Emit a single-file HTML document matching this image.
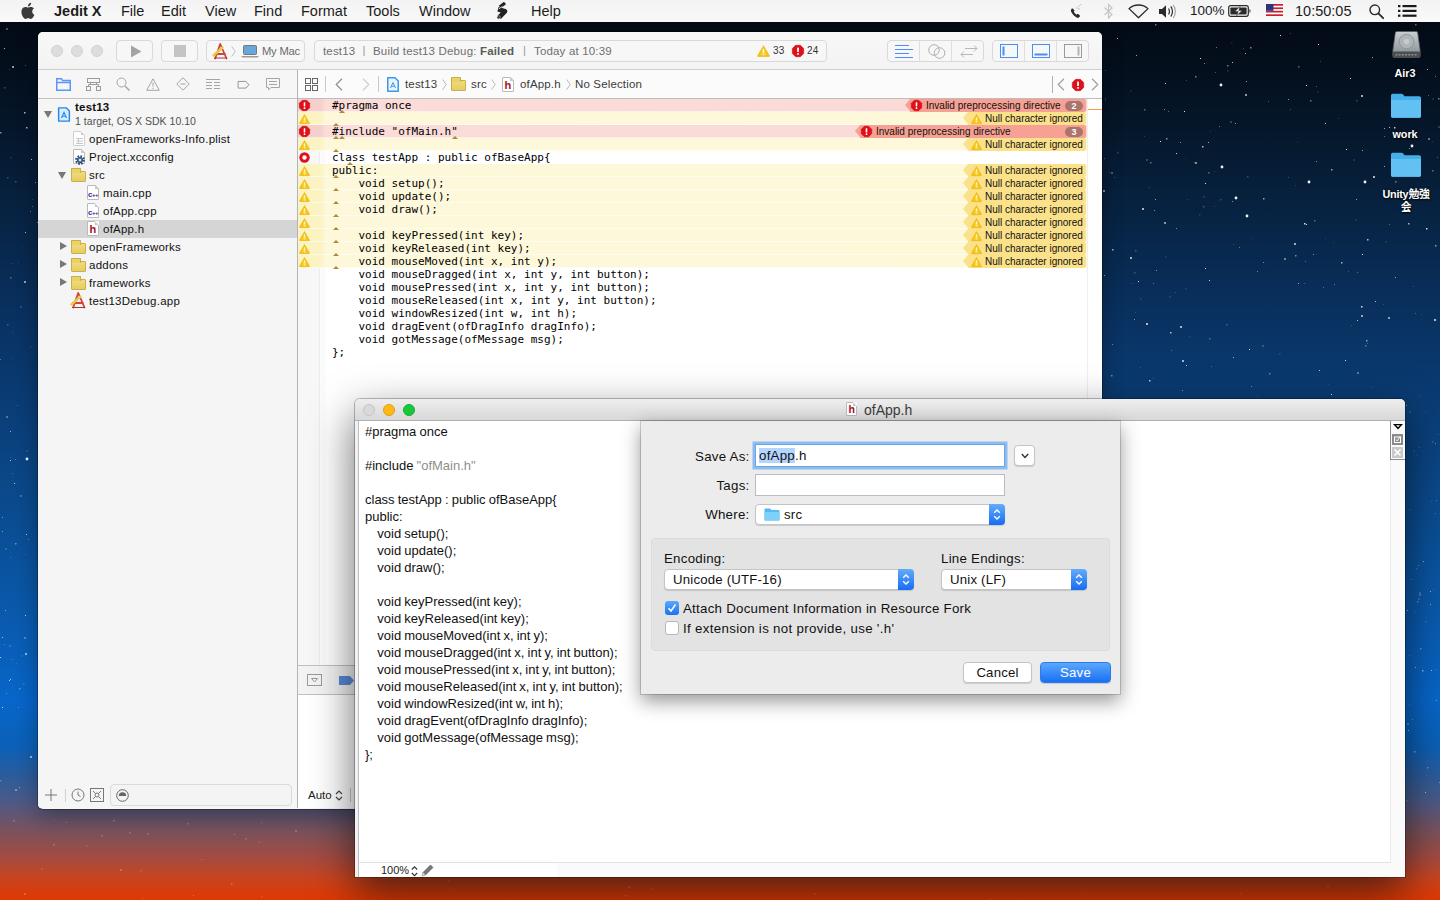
<!DOCTYPE html>
<html><head><meta charset="utf-8"><title>Jedit X</title>
<style>
*{box-sizing:border-box;margin:0;padding:0}
html,body{width:1440px;height:900px;overflow:hidden}
body{font-family:"Liberation Sans","Noto Sans CJK JP",sans-serif;font-size:13px;color:#222;position:relative;
background:linear-gradient(180deg,#02060c 0px,#030a14 22px,#051426 110px,#07213e 200px,#092f5c 300px,#0a3c74 400px,#0a4a8c 500px,#0a57a8 600px,#0766c9 700px,#0a60b8 745px,#2a5c9c 775px,#4a5a88 800px,#7d525a 833px,#a04c44 855px,#c84420 878px,#e03800 900px);}
.abs{position:absolute}
svg{position:absolute;overflow:visible}
#stars{left:0;top:0}
/* menubar */
#menubar{position:absolute;left:0;top:0;width:1440px;height:22px;background:linear-gradient(#f3f3f3,#f7f7f7 70%,#fafafa);font-size:14.5px;color:#1c1c1c}
#menubar span{position:absolute;top:2px;line-height:18px;white-space:nowrap}
.dlab{position:absolute;width:90px;text-align:center;color:#fff;font-weight:bold;font-size:10.8px;line-height:13px;text-shadow:0 1px 2px rgba(0,0,0,.9),0 0 2px rgba(0,0,0,.7)}
/* xcode */
#xc{position:absolute;left:38px;top:32px;width:1064px;height:777px;background:#f5f5f5;border-radius:5px;overflow:hidden;box-shadow:0 8px 22px rgba(0,0,0,.32),0 0 0 1px rgba(0,0,0,.28)}
#xtb{position:absolute;left:0;top:0;width:1064px;height:38px;background:linear-gradient(#f8f8f8,#f3f3f3);border-bottom:1px solid #cfcfcf}
.tl{position:absolute;width:12px;height:12px;border-radius:50%;background:#dddddd;border:1px solid #d2d2d2}
.btn{position:absolute;top:8px;height:22px;border:1px solid #d9d9d9;border-radius:4px;background:#f7f7f7}
.btn b{position:absolute;top:0;width:1px;height:20px;background:#dedede}
#side{position:absolute;left:0;top:38px;width:260px;height:738px;background:#f5f5f5;border-right:1px solid #b4b4b4}
#snav{position:absolute;left:0;top:0;width:259px;height:29px;border-bottom:1px solid #c2c2c2;background:#f6f6f6}
.row{position:absolute;left:0;width:259px;height:18px;font-size:11.5px;letter-spacing:.23px;line-height:18px;color:#111;white-space:nowrap}
.row span{position:absolute;top:0}
.tri{position:absolute;width:0;height:0;border-style:solid}
.td{border-width:7px 4.5px 0 4.5px;border-color:#777 transparent transparent transparent}
.tr{border-width:4.5px 0 4.5px 7px;border-color:transparent transparent transparent #777}
.fold{position:absolute;width:15px;height:11px;background:linear-gradient(#f0dc7a,#e6cd62);border:1px solid #c9b04a;border-radius:1px}
.fold:before{content:"";position:absolute;left:-1px;top:-4px;width:8px;height:4px;background:#e8d36a;border:1px solid #c9b04a;border-bottom:none;border-radius:1px 1px 0 0}
.doc{position:absolute;width:12px;height:15px;background:#fff;border:1px solid #b9b9b9;border-radius:1px}
.doc:after{content:"";position:absolute;right:-1px;top:-1px;width:4px;height:4px;background:linear-gradient(225deg,#f5f5f5 50%,#c9c9c9 50%)}
.doc em{position:absolute;left:0;bottom:-1px;font-style:normal;font-weight:bold;font-size:8px;line-height:9px;color:#4b1a9a;letter-spacing:-.5px}
#ed{position:absolute;left:260px;top:38px;width:804px;height:738px;background:#fff}
#jump{position:absolute;left:0;top:0;width:804px;height:29px;border-bottom:1px solid #bdbdbd;background:#fbfbfb;font-size:11.5px;letter-spacing:.15px;color:#3c3c3c}
#jump span{position:absolute;top:6px;line-height:16px;white-space:nowrap}
#jump i{position:absolute;top:7px;font-style:normal;color:#a8a8a8;font-size:12px;line-height:14px}
#gut{position:absolute;left:0;top:29px;width:28px;height:570px;background:#f7f7f7;border-right:1px solid #e4e4e4}
#gut2{position:absolute;left:21px;top:29px;width:7px;height:570px;background:#fbfbfb;border-left:1px solid #ececec}
.ln{position:absolute;left:0;width:789px;height:13px}
.ln.w,.ln.e{box-shadow:inset 0 -1px 0 rgba(255,255,255,.55)}
.code{position:absolute;left:34px;top:0;font:11px/13px "DejaVu Sans Mono","Liberation Mono",monospace;color:#000;white-space:pre}
.w{background:linear-gradient(90deg,#fbf3c2 0,#fbf3c2 22px,#fdf8da 28px,#fdf8d8 100%)}
.e{background:linear-gradient(90deg,#f5cfc9 0,#f5cfc9 22px,#fbdcd8 28px,#fbdad6 100%)}
.tagw,.tage{position:absolute;top:0;height:13px;font-size:10px;line-height:13px;color:#111;white-space:nowrap;border-radius:0 2px 2px 0}
.tagw{left:670px;width:118px;background:#fbe18a;padding-left:17px}
.tage{background:#f6a193;padding-left:16px}
.tagw:before,.tage:before{content:"";position:absolute;left:-5px;top:0;width:0;height:0;border-style:solid;border-width:6.5px 5px 6.5px 0}
.tagw:before{border-color:transparent #fbe18a transparent transparent}
.tage:before{border-color:transparent #f6a193 transparent transparent}
.cnt{position:absolute;right:3px;top:1.5px;width:18px;height:10px;border-radius:5px;background:#a9746c;color:#fff;font-weight:bold;font-size:9px;line-height:10px;text-align:center}
.nm{position:absolute;width:0;height:0;border-style:solid;border-width:0 3px 3px 3px;border-color:transparent transparent #b08a2e transparent}
/* jedit */
#jd{position:absolute;left:355px;top:399px;width:1050px;height:478px;background:#fff;border-radius:5px 5px 0 0;box-shadow:0 16px 44px rgba(0,0,0,.6),0 0 0 1px rgba(0,0,0,.25)}
#jtb{position:absolute;left:0;top:0;width:1050px;height:22px;background:linear-gradient(#eeeeee,#d8d8d8);border-radius:5px 5px 0 0;border-bottom:1px solid #b0b0b0;font-size:13.5px;color:#3a3a3a}
#jtxt{position:absolute;left:10px;top:24px;font-size:13px;line-height:17px;color:#111;white-space:pre;word-spacing:-.5px}
/* sheet */
#sh{position:absolute;left:641px;top:421px;width:479px;height:273px;background:#ececec;box-shadow:0 7px 18px rgba(0,0,0,.42),0 0 0 1px rgba(0,0,0,.16);font-size:13.3px;letter-spacing:.25px;color:#111}
#sh .lab{position:absolute;line-height:18px;white-space:nowrap;margin-top:1px}
.pop{position:absolute;height:21px;background:#fff;border:1px solid #c4c4c4;border-radius:4px;line-height:19px;box-shadow:0 1px 1px rgba(0,0,0,.14);white-space:nowrap;font-size:13.2px;letter-spacing:.2px}
.pop i{position:absolute;right:-1px;top:-1px;width:16px;height:21px;border-radius:0 4px 4px 0;background:linear-gradient(#62acfb,#176df3)}
.fld{position:absolute;height:22px;background:#fff;border:1px solid #bcbcbc}

.ind{display:inline-block;width:12.3px}

</style></head><body>
<svg id="stars" width="1440" height="900" viewBox="0 0 1440 900"><g fill="#fff"><rect x="1268" y="101" width="1" height="1" opacity="0.3"/><rect x="1140" y="298" width="1.5" height="1.5" opacity="0.14"/><rect x="1132" y="283" width="1" height="1" opacity="0.19"/><rect x="1325" y="238" width="1" height="1" opacity="0.13"/><rect x="1385" y="241" width="1.5" height="1.5" opacity="0.13"/><rect x="1166" y="138" width="1.5" height="1.5" opacity="0.5"/><rect x="1134" y="319" width="1" height="1" opacity="0.46"/><rect x="1216" y="47" width="1" height="1" opacity="0.43"/><rect x="1251" y="238" width="1" height="1" opacity="0.16"/><rect x="1395" y="181" width="1.5" height="1.5" opacity="0.44"/><rect x="1195" y="76" width="1.5" height="1.5" opacity="0.46"/><rect x="1199" y="214" width="1.5" height="1.5" opacity="0.14"/><rect x="1135" y="312" width="1" height="1" opacity="0.13"/><rect x="1357" y="372" width="2" height="2" opacity="0.33"/><rect x="1263" y="262" width="1" height="1" opacity="0.46"/><rect x="1288" y="177" width="1" height="1" opacity="0.21"/><rect x="1227" y="65" width="1.5" height="1.5" opacity="0.45"/><rect x="1356" y="199" width="1" height="1" opacity="0.6"/><rect x="1414" y="61" width="1" height="1" opacity="0.15"/><rect x="1187" y="199" width="1" height="1" opacity="0.16"/><rect x="1318" y="44" width="1" height="1" opacity="0.85"/><rect x="1388" y="317" width="2" height="2" opacity="0.54"/><rect x="1263" y="198" width="1.5" height="1.5" opacity="0.57"/><rect x="1357" y="320" width="1" height="1" opacity="0.68"/><rect x="1150" y="162" width="1.5" height="1.5" opacity="0.36"/><rect x="1136" y="55" width="1" height="1" opacity="0.6"/><rect x="1434" y="319" width="2" height="2" opacity="0.68"/><rect x="1331" y="169" width="1.5" height="1.5" opacity="0.59"/><rect x="1280" y="35" width="1" height="1" opacity="0.85"/><rect x="1189" y="336" width="1" height="1" opacity="0.15"/><rect x="1214" y="171" width="1" height="1" opacity="0.15"/><rect x="1306" y="224" width="1" height="1" opacity="0.82"/><rect x="1144" y="109" width="1.5" height="1.5" opacity="0.34"/><rect x="1245" y="94" width="2" height="2" opacity="0.56"/><rect x="1384" y="166" width="1" height="1" opacity="0.58"/><rect x="1297" y="142" width="1" height="1" opacity="0.16"/><rect x="1180" y="142" width="1" height="1" opacity="0.53"/><rect x="1351" y="325" width="1" height="1" opacity="0.17"/><rect x="1105" y="98" width="1" height="1" opacity="0.32"/><rect x="1415" y="313" width="1" height="1" opacity="0.25"/><rect x="1366" y="340" width="1.5" height="1.5" opacity="0.53"/><rect x="1130" y="257" width="2" height="2" opacity="0.64"/><rect x="1389" y="224" width="1" height="1" opacity="0.3"/><rect x="1156" y="270" width="1" height="1" opacity="0.51"/><rect x="1200" y="58" width="1" height="1" opacity="0.85"/><rect x="1186" y="80" width="1" height="1" opacity="0.26"/><rect x="1155" y="24" width="1.5" height="1.5" opacity="0.44"/><rect x="1154" y="210" width="1" height="1" opacity="0.49"/><rect x="1209" y="338" width="1.5" height="1.5" opacity="0.29"/><rect x="1232" y="201" width="1" height="1" opacity="0.48"/><rect x="1165" y="83" width="1" height="1" opacity="0.74"/><rect x="1348" y="271" width="1" height="1" opacity="0.24"/><rect x="1155" y="199" width="1" height="1" opacity="0.61"/><rect x="1185" y="288" width="1.5" height="1.5" opacity="0.12"/><rect x="1288" y="99" width="1" height="1" opacity="0.56"/><rect x="1373" y="176" width="2" height="2" opacity="0.68"/><rect x="1149" y="380" width="1.5" height="1.5" opacity="0.73"/><rect x="1290" y="109" width="1" height="1" opacity="0.27"/><rect x="1375" y="301" width="1" height="1" opacity="0.66"/><rect x="1428" y="138" width="2" height="2" opacity="0.39"/><rect x="1202" y="146" width="1.5" height="1.5" opacity="0.7"/><rect x="1219" y="126" width="1" height="1" opacity="0.4"/><rect x="1117" y="38" width="1" height="1" opacity="0.67"/><rect x="1235" y="123" width="1" height="1" opacity="0.56"/><rect x="1331" y="394" width="1" height="1" opacity="0.85"/><rect x="1144" y="136" width="1" height="1" opacity="0.14"/><rect x="1203" y="196" width="1.5" height="1.5" opacity="0.18"/><rect x="1415" y="24" width="1.5" height="1.5" opacity="0.37"/><rect x="1279" y="353" width="1.5" height="1.5" opacity="0.14"/><rect x="1164" y="222" width="2" height="2" opacity="0.53"/><rect x="1205" y="268" width="1" height="1" opacity="0.78"/><rect x="1428" y="194" width="1.5" height="1.5" opacity="0.14"/><rect x="1305" y="261" width="1" height="1" opacity="0.31"/><rect x="1184" y="111" width="1" height="1" opacity="0.85"/><rect x="1180" y="326" width="2" height="2" opacity="0.64"/><rect x="1438" y="98" width="1.5" height="1.5" opacity="0.48"/><rect x="1345" y="360" width="1" height="1" opacity="0.84"/><rect x="1383" y="304" width="1" height="1" opacity="0.15"/><rect x="1435" y="76" width="1" height="1" opacity="0.41"/><rect x="1325" y="123" width="1" height="1" opacity="0.71"/><rect x="1117" y="152" width="1.5" height="1.5" opacity="0.19"/><rect x="1226" y="324" width="1.5" height="1.5" opacity="0.25"/><rect x="1317" y="91" width="1.5" height="1.5" opacity="0.13"/><rect x="1284" y="258" width="2" height="2" opacity="0.42"/><rect x="1367" y="239" width="1.5" height="1.5" opacity="0.71"/><rect x="1169" y="296" width="1.5" height="1.5" opacity="0.16"/><rect x="1112" y="249" width="1.5" height="1.5" opacity="0.65"/><rect x="1105" y="100" width="1" height="1" opacity="0.17"/><rect x="1419" y="395" width="1" height="1" opacity="0.15"/><rect x="1269" y="373" width="1.5" height="1.5" opacity="0.4"/><rect x="1350" y="78" width="1" height="1" opacity="0.78"/><rect x="1230" y="121" width="2" height="2" opacity="0.18"/><rect x="1153" y="283" width="1" height="1" opacity="0.34"/><rect x="1135" y="250" width="1.5" height="1.5" opacity="0.25"/><rect x="1413" y="286" width="1" height="1" opacity="0.18"/><rect x="1334" y="284" width="1" height="1" opacity="0.41"/><rect x="1362" y="150" width="1" height="1" opacity="0.57"/><rect x="1389" y="127" width="1" height="1" opacity="0.73"/><rect x="1316" y="86" width="1" height="1" opacity="0.3"/><rect x="1140" y="367" width="1" height="1" opacity="0.2"/><rect x="1211" y="366" width="1" height="1" opacity="0.24"/><rect x="1182" y="390" width="1" height="1" opacity="0.52"/><rect x="1176" y="153" width="1" height="1" opacity="0.78"/><rect x="1215" y="72" width="1" height="1" opacity="0.3"/><rect x="1186" y="365" width="1" height="1" opacity="0.72"/><rect x="1323" y="287" width="1" height="1" opacity="0.31"/><rect x="1203" y="206" width="1.5" height="1.5" opacity="0.25"/><rect x="1290" y="33" width="1" height="1" opacity="0.26"/><rect x="1328" y="384" width="1" height="1" opacity="0.12"/><rect x="1367" y="343" width="1" height="1" opacity="0.23"/><rect x="1160" y="141" width="1" height="1" opacity="0.85"/><rect x="1146" y="159" width="2" height="2" opacity="0.18"/><rect x="1195" y="162" width="2" height="2" opacity="0.5"/><rect x="1319" y="370" width="1" height="1" opacity="0.7"/><rect x="1310" y="100" width="1.5" height="1.5" opacity="0.42"/><rect x="1395" y="277" width="1" height="1" opacity="0.57"/><rect x="1245" y="53" width="1" height="1" opacity="0.68"/><rect x="1320" y="61" width="1" height="1" opacity="0.22"/><rect x="1427" y="69" width="1" height="1" opacity="0.68"/><rect x="1414" y="137" width="2" height="2" opacity="0.1"/><rect x="1165" y="256" width="1.5" height="1.5" opacity="0.12"/><rect x="1316" y="161" width="1" height="1" opacity="0.49"/><rect x="1372" y="387" width="1" height="1" opacity="0.2"/><rect x="1185" y="158" width="1" height="1" opacity="0.13"/><rect x="1262" y="345" width="2" height="2" opacity="0.19"/><rect x="1208" y="172" width="1.5" height="1.5" opacity="0.34"/><rect x="1194" y="162" width="1" height="1" opacity="0.27"/><rect x="1231" y="42" width="1.5" height="1.5" opacity="0.12"/><rect x="1361" y="306" width="1.5" height="1.5" opacity="0.85"/><rect x="1346" y="149" width="1" height="1" opacity="0.84"/><rect x="1435" y="245" width="1.5" height="1.5" opacity="0.53"/><rect x="1304" y="283" width="1" height="1" opacity="0.24"/><rect x="1220" y="199" width="1.5" height="1.5" opacity="0.18"/><rect x="1428" y="95" width="1" height="1" opacity="0.31"/><rect x="1130" y="90" width="1.5" height="1.5" opacity="0.12"/><rect x="1233" y="244" width="1" height="1" opacity="0.16"/><rect x="1298" y="283" width="1" height="1" opacity="0.54"/><rect x="1409" y="148" width="1" height="1" opacity="0.56"/><rect x="1338" y="118" width="1" height="1" opacity="0.16"/><rect x="1104" y="158" width="1" height="1" opacity="0.28"/><rect x="1383" y="189" width="1" height="1" opacity="0.2"/><rect x="1214" y="206" width="1" height="1" opacity="0.17"/><rect x="1298" y="66" width="1.5" height="1.5" opacity="0.36"/><rect x="1438" y="126" width="2" height="2" opacity="0.17"/><rect x="1105" y="70" width="1" height="1" opacity="0.22"/><rect x="1176" y="228" width="1" height="1" opacity="0.46"/><rect x="1114" y="177" width="1" height="1" opacity="0.24"/><rect x="1146" y="323" width="2" height="2" opacity="0.68"/><rect x="1182" y="360" width="2" height="2" opacity="0.63"/><rect x="1408" y="223" width="1.5" height="1.5" opacity="0.64"/><rect x="1356" y="100" width="1.5" height="1.5" opacity="0.23"/><rect x="1432" y="98" width="2" height="2" opacity="0.1"/><rect x="1365" y="345" width="1.5" height="1.5" opacity="0.33"/><rect x="1361" y="95" width="2" height="2" opacity="0.65"/><rect x="1361" y="315" width="2" height="2" opacity="0.58"/><rect x="1111" y="375" width="1.5" height="1.5" opacity="0.46"/><rect x="1432" y="141" width="1" height="1" opacity="0.14"/><rect x="1171" y="350" width="1" height="1" opacity="0.28"/><rect x="1295" y="255" width="1.5" height="1.5" opacity="0.44"/><rect x="1112" y="344" width="1" height="1" opacity="0.41"/><rect x="1353" y="159" width="2" height="2" opacity="0.1"/><rect x="1138" y="281" width="1" height="1" opacity="0.79"/><rect x="1372" y="57" width="1" height="1" opacity="0.62"/><rect x="1232" y="62" width="1" height="1" opacity="0.73"/><rect x="1208" y="142" width="1" height="1" opacity="0.61"/><rect x="1355" y="219" width="1.5" height="1.5" opacity="0.13"/><rect x="1250" y="47" width="1.5" height="1.5" opacity="0.49"/><rect x="1204" y="63" width="1" height="1" opacity="0.47"/><rect x="1233" y="357" width="1" height="1" opacity="0.62"/><rect x="1421" y="314" width="1" height="1" opacity="0.15"/><rect x="1134" y="272" width="1.5" height="1.5" opacity="0.22"/><rect x="1153" y="378" width="1" height="1" opacity="0.19"/><rect x="1251" y="386" width="1" height="1" opacity="0.4"/><rect x="1341" y="262" width="1.5" height="1.5" opacity="0.64"/><rect x="1205" y="183" width="1" height="1" opacity="0.85"/><rect x="1111" y="172" width="2" height="2" opacity="0.28"/><rect x="1362" y="254" width="1" height="1" opacity="0.85"/><rect x="1210" y="131" width="1" height="1" opacity="0.13"/><rect x="1175" y="292" width="1" height="1" opacity="0.21"/><rect x="1170" y="332" width="1.5" height="1.5" opacity="0.7"/><rect x="1246" y="81" width="1" height="1" opacity="0.58"/><rect x="1357" y="272" width="1" height="1" opacity="0.3"/><rect x="1104" y="275" width="1" height="1" opacity="0.55"/><rect x="1257" y="396" width="1" height="1" opacity="0.15"/><rect x="1295" y="185" width="1" height="1" opacity="0.15"/><rect x="1103" y="190" width="2" height="2" opacity="0.5"/><rect x="1306" y="85" width="1" height="1" opacity="0.84"/><rect x="1109" y="172" width="1" height="1" opacity="0.21"/><rect x="1304" y="223" width="1.5" height="1.5" opacity="0.85"/><rect x="1142" y="208" width="2" height="2" opacity="0.66"/><rect x="1243" y="48" width="1" height="1" opacity="0.22"/><rect x="1249" y="349" width="1" height="1" opacity="0.84"/><rect x="1239" y="247" width="1" height="1" opacity="0.39"/><rect x="1294" y="243" width="2" height="2" opacity="0.62"/><rect x="1426" y="228" width="1.5" height="1.5" opacity="0.81"/><rect x="1384" y="128" width="1" height="1" opacity="0.59"/><rect x="1313" y="254" width="1" height="1" opacity="0.49"/><rect x="1432" y="170" width="1.5" height="1.5" opacity="0.37"/><rect x="1168" y="111" width="1" height="1" opacity="0.36"/><rect x="1247" y="176" width="1.5" height="1.5" opacity="0.21"/><rect x="1437" y="157" width="1" height="1" opacity="0.31"/><rect x="1257" y="271" width="1" height="1" opacity="0.43"/><rect x="1164" y="109" width="1" height="1" opacity="0.51"/><rect x="1209" y="280" width="1" height="1" opacity="0.8"/><rect x="1384" y="136" width="1" height="1" opacity="0.35"/><rect x="1333" y="242" width="1" height="1" opacity="0.15"/><rect x="1227" y="70" width="1.5" height="1.5" opacity="0.17"/><rect x="1149" y="187" width="1" height="1" opacity="0.2"/><rect x="1394" y="127" width="1.5" height="1.5" opacity="0.78"/><rect x="1314" y="220" width="1.5" height="1.5" opacity="0.32"/><rect x="1419" y="592" width="2" height="2" opacity="0.18"/><rect x="1409" y="655" width="1" height="1" opacity="0.22"/><rect x="1414" y="751" width="1.5" height="1.5" opacity="0.39"/><rect x="1419" y="447" width="1" height="1" opacity="0.22"/><rect x="1430" y="604" width="1" height="1" opacity="0.52"/><rect x="1425" y="411" width="1" height="1" opacity="0.15"/><rect x="1436" y="700" width="1" height="1" opacity="0.38"/><rect x="1431" y="670" width="1" height="1" opacity="0.6"/><rect x="1421" y="800" width="1" height="1" opacity="0.14"/><rect x="1415" y="667" width="1" height="1" opacity="0.6"/><rect x="1435" y="443" width="1" height="1" opacity="0.43"/><rect x="1406" y="800" width="1.5" height="1.5" opacity="0.15"/><rect x="1408" y="730" width="1" height="1" opacity="0.59"/><rect x="1422" y="670" width="1.5" height="1.5" opacity="0.51"/><rect x="1413" y="450" width="1.5" height="1.5" opacity="0.13"/><rect x="1418" y="598" width="2" height="2" opacity="0.17"/><rect x="1406" y="405" width="1" height="1" opacity="0.42"/><rect x="1423" y="561" width="1" height="1" opacity="0.52"/><rect x="1436" y="669" width="1" height="1" opacity="0.2"/><rect x="1407" y="610" width="1" height="1" opacity="0.58"/><rect x="1409" y="411" width="1.5" height="1.5" opacity="0.18"/><rect x="1432" y="441" width="1.5" height="1.5" opacity="0.21"/><rect x="1433" y="589" width="1" height="1" opacity="0.19"/><rect x="1427" y="767" width="1.5" height="1.5" opacity="0.32"/><rect x="1431" y="501" width="1" height="1" opacity="0.12"/><rect x="1438" y="434" width="1" height="1" opacity="0.18"/><rect x="1425" y="792" width="1" height="1" opacity="0.6"/><rect x="1435" y="513" width="1" height="1" opacity="0.22"/><rect x="1412" y="719" width="1" height="1" opacity="0.38"/><rect x="1420" y="648" width="1.5" height="1.5" opacity="0.32"/><rect x="1409" y="704" width="1" height="1" opacity="0.16"/><rect x="1409" y="509" width="1.5" height="1.5" opacity="0.12"/><rect x="1415" y="612" width="1" height="1" opacity="0.13"/><rect x="1417" y="601" width="1.5" height="1.5" opacity="0.34"/><rect x="1426" y="775" width="1" height="1" opacity="0.14"/><rect x="1416" y="568" width="1.5" height="1.5" opacity="0.18"/><rect x="1439" y="782" width="1" height="1" opacity="0.36"/><rect x="1430" y="591" width="1" height="1" opacity="0.6"/><rect x="1416" y="455" width="1" height="1" opacity="0.12"/><rect x="1411" y="579" width="1" height="1" opacity="0.32"/><rect x="1419" y="594" width="2" height="2" opacity="0.22"/><rect x="1425" y="621" width="1.5" height="1.5" opacity="0.14"/><rect x="1436" y="500" width="1" height="1" opacity="0.28"/><rect x="1418" y="565" width="1" height="1" opacity="0.28"/><rect x="1407" y="723" width="2" height="2" opacity="0.25"/><rect x="25" y="65" width="1" height="1" opacity="0.29"/><rect x="4" y="87" width="1.5" height="1.5" opacity="0.21"/><rect x="4" y="644" width="1" height="1" opacity="0.26"/><rect x="21" y="655" width="1.5" height="1.5" opacity="0.13"/><rect x="20" y="306" width="1.5" height="1.5" opacity="0.23"/><rect x="4" y="48" width="1" height="1" opacity="0.7"/><rect x="30" y="756" width="2" height="2" opacity="0.56"/><rect x="24" y="281" width="2" height="2" opacity="0.56"/><rect x="31" y="159" width="1" height="1" opacity="0.7"/><rect x="0" y="780" width="1.5" height="1.5" opacity="0.24"/><rect x="9" y="645" width="2" height="2" opacity="0.16"/><rect x="20" y="495" width="2" height="2" opacity="0.22"/><rect x="5" y="548" width="2" height="2" opacity="0.14"/><rect x="10" y="277" width="1.5" height="1.5" opacity="0.31"/><rect x="2" y="517" width="1" height="1" opacity="0.43"/><rect x="10" y="460" width="1" height="1" opacity="0.7"/><rect x="16" y="663" width="1" height="1" opacity="0.14"/><rect x="26" y="534" width="1" height="1" opacity="0.7"/><rect x="11" y="263" width="1" height="1" opacity="0.15"/><rect x="15" y="789" width="2" height="2" opacity="0.34"/><rect x="7" y="324" width="1.5" height="1.5" opacity="0.23"/><rect x="17" y="405" width="1" height="1" opacity="0.21"/><rect x="12" y="473" width="1" height="1" opacity="0.21"/><rect x="15" y="181" width="1.5" height="1.5" opacity="0.23"/><rect x="12" y="358" width="1" height="1" opacity="0.13"/><rect x="15" y="543" width="1.5" height="1.5" opacity="0.41"/><rect x="6" y="693" width="1" height="1" opacity="0.35"/><rect x="6" y="28" width="2" height="2" opacity="0.29"/><rect x="14" y="483" width="1" height="1" opacity="0.7"/><rect x="18" y="262" width="1" height="1" opacity="0.15"/><rect x="37" y="222" width="1" height="1" opacity="0.7"/><rect x="32" y="206" width="1" height="1" opacity="0.34"/><rect x="0" y="132" width="1.5" height="1.5" opacity="0.51"/><rect x="22" y="246" width="1" height="1" opacity="0.12"/><rect x="9" y="69" width="1" height="1" opacity="0.18"/><rect x="2" y="637" width="1" height="1" opacity="0.61"/><rect x="0" y="359" width="1" height="1" opacity="0.31"/><rect x="11" y="659" width="1" height="1" opacity="0.24"/><rect x="2" y="531" width="1" height="1" opacity="0.43"/><rect x="26" y="127" width="1.5" height="1.5" opacity="0.68"/><rect x="35" y="182" width="1" height="1" opacity="0.51"/><rect x="10" y="431" width="1" height="1" opacity="0.57"/><rect x="18" y="707" width="1" height="1" opacity="0.24"/><rect x="19" y="787" width="1" height="1" opacity="0.44"/><rect x="26" y="450" width="2" height="2" opacity="0.1"/><rect x="23" y="683" width="1.5" height="1.5" opacity="0.18"/><rect x="25" y="232" width="1" height="1" opacity="0.7"/><rect x="10" y="457" width="1" height="1" opacity="0.14"/><rect x="25" y="615" width="1" height="1" opacity="0.7"/><rect x="10" y="157" width="1.5" height="1.5" opacity="0.12"/><rect x="9" y="680" width="1" height="1" opacity="0.69"/><rect x="5" y="610" width="1" height="1" opacity="0.49"/><rect x="32" y="199" width="1" height="1" opacity="0.16"/><rect x="10" y="557" width="1" height="1" opacity="0.17"/><rect x="6" y="416" width="2" height="2" opacity="0.3"/><rect x="12" y="332" width="1" height="1" opacity="0.15"/><rect x="30" y="346" width="1.5" height="1.5" opacity="0.13"/><rect x="24" y="112" width="1.5" height="1.5" opacity="0.7"/><rect x="10" y="679" width="1" height="1" opacity="0.66"/><rect x="25" y="653" width="2" height="2" opacity="0.56"/><rect x="30" y="211" width="1" height="1" opacity="0.44"/><rect x="25" y="554" width="1" height="1" opacity="0.16"/><rect x="7" y="177" width="1.5" height="1.5" opacity="0.21"/><rect x="12" y="66" width="2" height="2" opacity="0.56"/><rect x="2" y="707" width="1" height="1" opacity="0.7"/><rect x="24" y="637" width="2" height="2" opacity="0.28"/><rect x="19" y="688" width="1.5" height="1.5" opacity="0.32"/><rect x="15" y="459" width="1" height="1" opacity="0.3"/><rect x="28" y="539" width="1" height="1" opacity="0.33"/><rect x="0" y="657" width="1" height="1" opacity="0.7"/><rect x="120" y="869" width="2" height="2" opacity="0.2"/><rect x="234" y="834" width="1" height="1" opacity="0.25"/><rect x="54" y="820" width="1" height="1" opacity="0.15"/><rect x="187" y="823" width="1.5" height="1.5" opacity="0.25"/><rect x="261" y="896" width="1.5" height="1.5" opacity="0.12"/><rect x="66" y="822" width="1" height="1" opacity="0.25"/><rect x="261" y="822" width="1.5" height="1.5" opacity="0.13"/><rect x="193" y="895" width="1" height="1" opacity="0.25"/><rect x="13" y="820" width="1.5" height="1.5" opacity="0.25"/><rect x="354" y="826" width="1" height="1" opacity="0.18"/><rect x="147" y="833" width="1.5" height="1.5" opacity="0.25"/><rect x="113" y="820" width="1.5" height="1.5" opacity="0.25"/><rect x="129" y="832" width="1.5" height="1.5" opacity="0.25"/><rect x="140" y="870" width="1.5" height="1.5" opacity="0.16"/><rect x="245" y="838" width="1.5" height="1.5" opacity="0.25"/><rect x="259" y="842" width="1" height="1" opacity="0.25"/><rect x="101" y="835" width="1.5" height="1.5" opacity="0.25"/><rect x="142" y="898" width="1" height="1" opacity="0.25"/><rect x="86" y="845" width="1.5" height="1.5" opacity="0.15"/><rect x="24" y="893" width="2" height="2" opacity="0.2"/><rect x="231" y="883" width="1.5" height="1.5" opacity="0.25"/><rect x="53" y="844" width="1.5" height="1.5" opacity="0.25"/><rect x="201" y="859" width="1" height="1" opacity="0.22"/><rect x="295" y="830" width="2" height="2" opacity="0.2"/><rect x="41" y="868" width="1.5" height="1.5" opacity="0.2"/><rect x="453" y="889" width="1" height="1" opacity="0.2"/><rect x="990" y="898" width="1" height="1" opacity="0.2"/><rect x="358" y="881" width="1" height="1" opacity="0.19"/><rect x="1240" y="893" width="1" height="1" opacity="0.2"/><rect x="625" y="895" width="1.5" height="1.5" opacity="0.19"/><rect x="448" y="880" width="1.5" height="1.5" opacity="0.13"/><rect x="1081" y="889" width="1" height="1" opacity="0.14"/><rect x="814" y="893" width="1.5" height="1.5" opacity="0.2"/><rect x="628" y="886" width="2" height="2" opacity="0.16"/><rect x="1327" y="885" width="2" height="2" opacity="0.12"/><rect x="853" y="884" width="1" height="1" opacity="0.2"/><rect x="651" y="888" width="1" height="1" opacity="0.2"/><circle cx="1309" cy="182" r="1.400" opacity=".95"/><circle cx="1222" cy="167" r="1.400" opacity=".95"/><circle cx="1236" cy="198" r="1.400" opacity=".95"/><circle cx="1221" cy="85" r="1.400" opacity=".95"/><circle cx="1397" cy="45" r="1.400" opacity=".95"/><circle cx="1412" cy="146" r="1.400" opacity=".95"/><circle cx="1365" cy="182" r="1.400" opacity=".95"/><circle cx="27" cy="459" r="1.400" opacity=".95"/><circle cx="1247" cy="216" r="1.400" opacity=".95"/></g></svg>
<div id="menubar">
<svg style="left:20.500px;top:2px" width="16" height="18" viewBox="0 0 16 18"><path d="M11.2 9.5c0-2 1.6-2.9 1.7-3-.9-1.400-2.400-1.600-2.900-1.600-1.200-.1-2.400.7-3 .7-.6 0-1.600-.7-2.600-.7-1.300 0-2.600.8-3.300 2-1.400 2.400-.4 6 1 8 .700 1 1.500 2.100 2.500 2 1-.04 1.400-.65 2.600-.65 1.200 0 1.600.65 2.600.63 1.100-.02 1.800-1 2.400-1.950.800-1.100 1.100-2.200 1.100-2.250-.03-.01-2.100-.8-2.100-3.180zM9.300 3.300c.500-.700.900-1.600.800-2.500-.800.030-1.700.500-2.300 1.200-.500.600-.950 1.500-.830 2.400.870.070 1.770-.440 2.330-1.100z" fill="#3a3a3a"/></svg>
<span style="left:54px;font-weight:bold">Jedit X</span>
<span style="left:121px">File</span>
<span style="left:161px">Edit</span>
<span style="left:205px">View</span>
<span style="left:254px">Find</span>
<span style="left:301px">Format</span>
<span style="left:366px">Tools</span>
<span style="left:419px">Window</span>
<svg style="left:495px;top:1px" width="14" height="20" viewBox="0 0 14 20"><path d="M10 2L4.800 6" fill="none" stroke="#222" stroke-width="3.300"/><path d="M3 8.300L10 10.300L4.200 16.300" fill="none" stroke="#222" stroke-width="4.600" stroke-linejoin="round"/><path d="M3.800 8L7.600 5.200" stroke="#f4f4f4" stroke-width=".8"/><circle cx="3.700" cy="16.300" r="1.500" fill="#222" stroke="#aaa" stroke-width=".8"/></svg>
<span style="left:531px">Help</span>
<!-- phone -->
<svg style="left:1068px;top:3px" width="18" height="17" viewBox="0 0 18 17"><path d="M3.200 6.500c-.5.500-.4 1.600.4 3 1 1.800 2.800 3.700 4.600 4.700 1.200.700 2.200.800 2.700.300l.900-.900c.300-.300.300-.700 0-1l-1.600-1.500c-.3-.300-.7-.300-1 0l-.600.600c-.7-.300-2.600-2.200-2.900-2.900l.6-.600c.300-.300.300-.7 0-1L4.800 5.600c-.3-.3-.7-.3-1 0z" fill="#2a2a2a"/><path d="M8.500 5.500l1-1M10.500 3.700l1-1M12.500 1.900l.8-.7M10.300 6.500l1-1" stroke="#bdbdbd" stroke-width="1.200"/></svg>
<!-- bluetooth -->
<svg style="left:1103px;top:3px" width="11" height="17" viewBox="0 0 11 17"><path d="M1.500 4.500 L9 11.500 L5.500 15 L5.500 1.500 L9 5 L1.500 12" fill="none" stroke="#c6c6c6" stroke-width="1.200"/></svg>
<!-- wifi -->
<svg style="left:1128px;top:4px" width="21" height="15" viewBox="0 0 21 15"><path d="M10.500 13.800 L1 4.600 C6 -.2 15 -.2 20 4.600 Z" fill="#f4f4f4" stroke="#2a2a2a" stroke-width="1.300" stroke-linejoin="round"/></svg>
<!-- volume -->
<svg style="left:1158px;top:4px" width="19" height="15" viewBox="0 0 19 15"><path d="M1 5h3l4-3.800v12.600L4 10H1z" fill="#2a2a2a"/><path d="M10.500 4.500c1.200 1.500 1.200 4.500 0 6M12.800 2.500c2.200 2.600 2.200 7.400 0 10" fill="none" stroke="#2a2a2a" stroke-width="1.200"/><path d="M15.200 1c2.800 3.600 2.800 9.400 0 13" fill="none" stroke="#9a9a9a" stroke-width="1.100"/></svg>
<span style="left:1190px;font-size:13.5px">100%</span>
<!-- battery -->
<svg style="left:1228px;top:5px" width="24" height="12" viewBox="0 0 24 12"><rect x=".7" y=".7" width="19.600" height="10.600" rx="2" fill="none" stroke="#2a2a2a" stroke-width="1.200"/><rect x="2.400" y="2.400" width="16.200" height="7.200" rx=".8" fill="#2a2a2a"/><path d="M21.500 4v4c1.300-.3 1.300-3.700 0-4z" fill="#2a2a2a"/><path d="M12.200 1.200 L6.800 6.500 H10.200 L8.600 10.800 L14.200 5.400 H10.800 Z" fill="#f4f4f4" stroke="#2a2a2a" stroke-width=".5"/></svg>
<!-- flag -->
<svg style="left:1266px;top:4px" width="17" height="12" viewBox="0 0 17 12"><rect width="17" height="12" fill="#fff"/><g fill="#c8202f"><rect y="0" width="17" height="1.700"/><rect y="3.400" width="17" height="1.700"/><rect y="6.800" width="17" height="1.700"/><rect y="10.300" width="17" height="1.700"/></g><rect width="7.500" height="6.800" fill="#2a3580"/></svg>
<span style="left:1295px">10:50:05</span>
<!-- search -->
<svg style="left:1368px;top:3px" width="17" height="17" viewBox="0 0 17 17"><circle cx="6.800" cy="6.800" r="4.800" fill="none" stroke="#2a2a2a" stroke-width="1.400"/><path d="M10.400 10.400 L15.200 15.200" stroke="#2a2a2a" stroke-width="1.800" stroke-linecap="round"/></svg>
<!-- list -->
<svg style="left:1398px;top:5px" width="19" height="12" viewBox="0 0 19 12"><g fill="#1a1a1a"><rect x="0" y="0" width="2.400" height="2.200"/><rect x="4.500" y="0" width="14" height="2.200"/><rect x="0" y="4.800" width="2.400" height="2.200"/><rect x="4.500" y="4.800" width="14" height="2.200"/><rect x="0" y="9.600" width="2.400" height="2.200"/><rect x="4.500" y="9.600" width="14" height="2.200"/></g></svg>
</div>
<!-- desktop icons -->
<svg style="left:1390.500px;top:28.500px" width="31" height="30.500" viewBox="0 0 34 32"><defs><linearGradient id="hd" x1="0" y1="0" x2="0" y2="1"><stop offset="0" stop-color="#c9cfd1"/><stop offset=".7" stop-color="#979fa2"/><stop offset="1" stop-color="#7f878a"/></linearGradient></defs><path d="M6.500 2 H27.500 Q29 2 29.300 3.500 L32 23 V29 Q32 30.500 30.500 30.500 H3.500 Q2 30.500 2 29 V23 L4.700 3.500 Q5 2 6.500 2Z" fill="url(#hd)" stroke="#50575a" stroke-width=".8"/><circle cx="17" cy="13" r="8" fill="#aeb5b8" stroke="#868e91" stroke-width=".8"/><circle cx="17" cy="13" r="3" fill="#c5cbcd"/><path d="M2 24 H32 V29 Q32 30.500 30.500 30.500 H3.500 Q2 30.500 2 29Z" fill="#4a4f52"/><path d="M5 27.500H29" stroke="#8a9093" stroke-width="1.500" stroke-dasharray="2 1.500"/></svg>
<div class="dlab" style="left:1360px;top:67px">Air3</div>
<svg style="left:1389px;top:92px" width="34" height="28" viewBox="0 0 34 28"><path d="M2 3.500c0-1 .8-1.800 1.800-1.800h8.700c.7 0 1.200.3 1.700.9l1.300 1.600h14.700c1 0 1.800.8 1.800 1.800v18c0 1-.8 1.800-1.800 1.800H3.800c-1 0-1.800-.8-1.800-1.800z" fill="#45aee8"/><path d="M2 8h30v16c0 1-.8 1.800-1.800 1.800H3.800c-1 0-1.800-.8-1.800-1.800z" fill="#62c0f3"/></svg>
<div class="dlab" style="left:1360px;top:128px">work</div>
<svg style="left:1389px;top:151px" width="34" height="28" viewBox="0 0 34 28"><path d="M2 3.500c0-1 .8-1.800 1.800-1.800h8.700c.7 0 1.200.3 1.700.9l1.300 1.600h14.700c1 0 1.800.8 1.800 1.800v18c0 1-.8 1.800-1.800 1.800H3.800c-1 0-1.800-.8-1.800-1.800z" fill="#45aee8"/><path d="M2 8h30v16c0 1-.8 1.800-1.800 1.800H3.800c-1 0-1.800-.8-1.800-1.800z" fill="#62c0f3"/></svg>
<div class="dlab" style="left:1361px;top:188px;letter-spacing:-.2px">Unity勉強<br>会</div>
<div id="xc">
<div id="xtb">
<div class="tl" style="left:13px;top:13px"></div>
<div class="tl" style="left:33px;top:13px"></div>
<div class="tl" style="left:53px;top:13px"></div>
<div class="btn" style="left:78px;width:37px"><svg style="left:13px;top:4px" width="12" height="13" viewBox="0 0 12 13"><path d="M1 .5 L11.500 6.500 L1 12.500 Z" fill="#a3a3a3"/></svg></div>
<div class="btn" style="left:123px;width:37px"><svg style="left:12px;top:4px" width="12" height="12" viewBox="0 0 12 12"><rect width="12" height="12" fill="#c4c4c4"/></svg></div>
<div class="btn" style="left:168px;width:99px">
<svg style="left:5px;top:2px" width="17" height="17" viewBox="0 0 17 17"><path d="M8.200 1 L3.200 15.500 M8.200 1 L14.500 15.500 M4.500 11 H13" fill="none" stroke="#d2433a" stroke-width="1.800" stroke-linecap="round"/><path d="M1.500 12.500 L10.500 4.500" stroke="#e8c74a" stroke-width="2.400" stroke-linecap="round"/><path d="M2 15 H15" stroke="#b03028" stroke-width="1"/></svg>
<svg style="left:24px;top:5px" width="5" height="11" viewBox="0 0 5 11"><path d="M.7 .5L4.200 5.500L.7 10.500" fill="none" stroke="#c0c0c0" stroke-width="1"/></svg>
<svg style="left:34px;top:4px" width="18" height="13" viewBox="0 0 18 13"><rect x="2.500" y=".5" width="13" height="9" rx="1" fill="#6aa6dc" stroke="#777" stroke-width="1"/><path d="M0 11 H18 L16.500 12.500 H1.500 Z" fill="#9a9a9a"/></svg>
<span class="abs" style="left:55px;top:2px;font-size:11.2px;line-height:16px;color:#6a6a6a;white-space:nowrap;letter-spacing:-.2px">My Mac</span></div>
<div class="btn" style="left:276px;width:513px;font-size:11.5px;letter-spacing:.17px;color:#6e6e6e">
<span class="abs" style="left:8px;top:2px;line-height:16px;white-space:nowrap">test13</span>
<span class="abs" style="left:47.500px;top:1px;line-height:16px;color:#999">|</span>
<span class="abs" style="left:58px;top:2px;line-height:16px;white-space:nowrap">Build test13 Debug: <b style="position:static;background:none;color:#5a5a5a">Failed</b></span>
<span class="abs" style="left:208px;top:1px;line-height:16px;color:#999">|</span>
<span class="abs" style="left:219px;top:2px;line-height:16px;white-space:nowrap">Today at 10:39</span>
<svg style="left:442px;top:3.5px" width="13" height="12" viewBox="0 0 11 10"><path d="M5.500 .5 L10.500 9.100 Q10.600 9.700 10 9.700 H1 Q.4 9.700 .5 9.100 Z" fill="#f5c211" stroke="#eab308" stroke-width=".5" stroke-linejoin="round"/><path d="M5.500 2.800 L8.200 8.400 H2.800 Z" fill="#f8cf3a"/><rect x="4.800" y="3.200" width="1.400" height="3.400" rx=".5" fill="#fff4c4"/><rect x="4.800" y="7.300" width="1.400" height="1.300" rx=".5" fill="#fff4c4"/></svg>
<span class="abs" style="left:458px;top:3px;font-size:10px;line-height:14px;color:#333">33</span>
<svg style="left:477px;top:4px" width="12" height="12" viewBox="0 0 11 11"><path d="M3.300 .3 H7.700 L10.700 3.300 V7.700 L7.700 10.700 H3.300 L.3 7.700 V3.300 Z" fill="#e0101a" stroke="#c20812" stroke-width=".5"/><rect x="4.700" y="2.200" width="1.600" height="4.200" rx=".5" fill="#fff"/><rect x="4.700" y="7.300" width="1.600" height="1.600" rx=".5" fill="#fff"/></svg>
<span class="abs" style="left:492px;top:3px;font-size:10px;line-height:14px;color:#333">24</span>
</div>
<div class="btn" style="left:849px;width:97px"><b style="left:31px"></b><b style="left:63px"></b>
<svg style="left:7px;top:4px" width="19" height="13" viewBox="0 0 19 13"><path d="M0 .5H14M0 4.500H18M0 8.500H14M0 12.500H18" stroke="#4d8df6" stroke-width="1"/></svg>
<svg style="left:40px;top:3px" width="18" height="15" viewBox="0 0 18 15"><circle cx="6" cy="6" r="5.300" fill="none" stroke="#b0b0b0" stroke-width="1"/><circle cx="11.500" cy="9" r="5.300" fill="none" stroke="#b0b0b0" stroke-width="1"/></svg>
<svg style="left:71px;top:4px" width="20" height="13" viewBox="0 0 20 13"><path d="M6 3.500H18M15 .5L18 3.500L15 6.500M14 9.500H2M5 6.500L2 9.500L5 12.500" fill="none" stroke="#b8b8b8" stroke-width="1"/></svg>
</div>
<div class="btn" style="left:954px;width:97px"><b style="left:31px"></b><b style="left:63px"></b>
<svg style="left:7px;top:3px" width="18" height="14" viewBox="0 0 18 14"><rect x=".5" y=".5" width="17" height="13" fill="none" stroke="#4d8df6" stroke-width="1"/><rect x="2.500" y="2.500" width="2" height="9" fill="#4d8df6"/></svg>
<svg style="left:39px;top:3px" width="18" height="14" viewBox="0 0 18 14"><rect x=".5" y=".5" width="17" height="13" fill="none" stroke="#4d8df6" stroke-width="1"/><rect x="2.500" y="9.500" width="13" height="2" fill="#4d8df6"/></svg>
<svg style="left:71px;top:3px" width="18" height="14" viewBox="0 0 18 14"><rect x=".5" y=".5" width="17" height="13" fill="none" stroke="#9a9a9a" stroke-width="1"/><rect x="13.500" y="2.500" width="2" height="9" fill="#b4b4b4"/></svg>
</div>
</div>
<div id="side"><div id="snav">
<svg style="left:18px;top:8px" width="15" height="13" viewBox="0 0 15 13"><path d="M.75 2.500V12.250H14.250V2.500H6.500L5.500 .75H.75Z M.75 4.500H14.250" fill="none" stroke="#5b97f7" stroke-width="1.500"/></svg>
<svg style="left:48px;top:8px" width="15" height="13" viewBox="0 0 15 13"><g fill="none" stroke="#9b9b9b" stroke-width="1"><rect x="1.500" y=".5" width="12" height="4"/><rect x=".5" y="8.500" width="4" height="4"/><rect x="10.500" y="8.500" width="4" height="4"/><path d="M2.500 8.500V6.500H12.500V8.500M4.500 4.500V6.500M10.500 4.500V6.500"/></g></svg>
<svg style="left:78px;top:7px" width="15" height="15" viewBox="0 0 15 15"><circle cx="5.500" cy="5.500" r="4.500" fill="none" stroke="#a5a5a5" stroke-width="1"/><path d="M9 9L13.500 13.500" stroke="#a5a5a5" stroke-width="1.500"/></svg>
<svg style="left:108px;top:8px" width="14" height="13" viewBox="0 0 14 13"><path d="M7 .8L13.300 12.300H.7Z" fill="none" stroke="#a5a5a5" stroke-width="1" stroke-linejoin="round"/><path d="M7 4.500V8.500M7 9.800V11" stroke="#a5a5a5" stroke-width="1"/></svg>
<svg style="left:138px;top:7px" width="14" height="14" viewBox="0 0 14 14"><path d="M7 .8L13.200 7L7 13.200L.8 7Z" fill="none" stroke="#a5a5a5" stroke-width="1" stroke-linejoin="round"/><path d="M4.500 7H9.500" stroke="#a5a5a5" stroke-width="1"/></svg>
<svg style="left:168px;top:9px" width="14" height="11" viewBox="0 0 14 11"><path d="M0 .5H14M0 3.500H6M8 3.500H14M0 6.500H6M8 6.500H14M0 9.500H6M8 9.500H14" stroke="#a5a5a5" stroke-width="1"/></svg>
<svg style="left:198.500px;top:11px" width="13" height="7.500" viewBox="0 0 14 9"><path d="M.5 .5H10L13.500 4.500L10 8.500H.5Z" fill="none" stroke="#979797" stroke-width="1.200" stroke-linejoin="round"/></svg>
<svg style="left:228px;top:8px" width="14" height="13" viewBox="0 0 14 13"><path d="M.5 .5H13.500V9.500H5L2.500 12V9.500H.5Z" fill="none" stroke="#a5a5a5" stroke-width="1" stroke-linejoin="round"/><path d="M3 3.500H11M3 6.500H11" stroke="#a5a5a5" stroke-width="1"/></svg>
</div>
<div class="tri td" style="left:6px;top:41px"></div>
<svg style="left:20px;top:37px" width="12" height="15" viewBox="0 0 14 17"><path d="M.75 .75H9.500L13.250 4.500V16.250H.75Z" fill="#d9edfd" stroke="#2388e6" stroke-width="1.700" stroke-linejoin="round"/><path d="M4 12.500L7 6L10 12.500M5 10.500H9" fill="none" stroke="#2388e6" stroke-width="1.300"/></svg>
<div class="row" style="top:28px"><span style="left:37px;font-weight:bold;font-size:11.500px;letter-spacing:.2px">test13</span></div>
<div class="row" style="top:42px"><span style="left:37px;font-size:10.500px;letter-spacing:.03px;color:#505050">1 target, OS X SDK 10.10</span></div>
<div class="abs" style="left:0;top:150px;width:259px;height:18px;background:#d5d5d5"></div>
<div class="doc" style="left:35px;top:61px;border-color:#cfcfcf"><svg style="left:2px;top:6px" width="7" height="6" viewBox="0 0 7 6"><path d="M0 .5H7M0 3H7M0 5.500H7M2.500 0V6" stroke="#c8c8c8" stroke-width="1"/></svg></div>
<div class="row" style="top:60px"><span style="left:51px">openFrameworks-Info.plist</span></div>
<div class="doc" style="left:35px;top:79px"></div><svg style="left:36px;top:84px" width="12" height="12" viewBox="0 0 12 12"><circle cx="6" cy="6" r="3.600" fill="none" stroke="#35507a" stroke-width="2.600" stroke-dasharray="1.600 1.220"/><circle cx="6" cy="6" r="2.700" fill="#5d7daa" stroke="#35507a" stroke-width="1"/><circle cx="6" cy="6" r="1" fill="#fff"/></svg>
<div class="row" style="top:78px"><span style="left:51px">Project.xcconfig</span></div>
<div class="tri td" style="left:20px;top:102px"></div>
<div class="fold" style="left:33px;top:101px"></div>
<div class="row" style="top:96px"><span style="left:51px">src</span></div>
<div class="doc" style="left:49px;top:115px"><em>c<span style="position:static;font-size:6px">++</span></em></div>
<div class="row" style="top:114px"><span style="left:65px">main.cpp</span></div>
<div class="doc" style="left:49px;top:133px"><em>c<span style="position:static;font-size:6px">++</span></em></div>
<div class="row" style="top:132px"><span style="left:65px">ofApp.cpp</span></div>
<div class="doc" style="left:49px;top:151px"><em style="color:#a3131f;font-size:11px;line-height:11px;left:1.500px;bottom:0;letter-spacing:0">h</em></div>
<div class="row" style="top:150px"><span style="left:65px">ofApp.h</span></div>
<div class="tri tr" style="left:22px;top:172px"></div>
<div class="fold" style="left:33px;top:173px"></div>
<div class="row" style="top:168px"><span style="left:51px">openFrameworks</span></div>
<div class="tri tr" style="left:22px;top:190px"></div>
<div class="fold" style="left:33px;top:191px"></div>
<div class="row" style="top:186px"><span style="left:51px">addons</span></div>
<div class="tri tr" style="left:22px;top:208px"></div>
<div class="fold" style="left:33px;top:209px"></div>
<div class="row" style="top:204px"><span style="left:51px">frameworks</span></div>
<svg style="left:32px;top:222px" width="17" height="17" viewBox="0 0 17 17"><path d="M8.200 1 L3.200 15.500 M8.200 1 L14.500 15.500 M4.500 11 H13" fill="none" stroke="#d2433a" stroke-width="1.800" stroke-linecap="round"/><path d="M1.500 12.500 L10.500 4.500" stroke="#e8c74a" stroke-width="2.400" stroke-linecap="round"/><path d="M2 15.500 H15" stroke="#b03028" stroke-width="1"/></svg>
<div class="row" style="top:222px"><span style="left:51px">test13Debug.app</span></div>
<svg style="left:7px;top:719px" width="12" height="12" viewBox="0 0 12 12"><path d="M6 0V12M0 6H12" stroke="#777" stroke-width="1"/></svg>
<div class="abs" style="left:27px;top:719px;width:1px;height:13px;background:#d0d0d0"></div>
<svg style="left:33px;top:718px" width="14" height="14" viewBox="0 0 14 14"><circle cx="7" cy="7" r="6" fill="none" stroke="#777" stroke-width="1"/><path d="M7 3.500V7L9.500 8.500" fill="none" stroke="#777" stroke-width="1"/></svg>
<svg style="left:52px;top:718px" width="14" height="14" viewBox="0 0 14 14"><rect x=".5" y=".5" width="13" height="13" fill="none" stroke="#777" stroke-width="1"/><path d="M3 3L11 11M11 3L3 11" stroke="#777" stroke-width="1"/><circle cx="7" cy="7" r="2" fill="#f5f5f5" stroke="#777" stroke-width="1"/></svg>
<div class="abs" style="left:72px;top:714px;width:182px;height:22px;border:1px solid #dadada;border-radius:4px;background:#f4f4f4"><svg style="left:5px;top:4px" width="13" height="13" viewBox="0 0 13 13"><circle cx="6.500" cy="6.500" r="5.800" fill="none" stroke="#666" stroke-width="1"/><path d="M2.800 7A3.700 3.700 0 0 1 10.200 7Z" fill="#666"/></svg></div>
</div>
<div id="ed"><div id="jump">
<svg style="left:7px;top:8px" width="13" height="13" viewBox="0 0 13 13"><g fill="none" stroke="#666" stroke-width="1"><rect x=".5" y=".5" width="5" height="5"/><rect x="7.500" y=".5" width="5" height="5"/><rect x=".5" y="7.500" width="5" height="5"/><rect x="7.500" y="7.500" width="5" height="5"/></g></svg>
<div class="abs" style="left:27px;top:6px;width:1px;height:16px;background:#c8c8c8"></div>
<svg style="left:37px;top:8px" width="8" height="13" viewBox="0 0 8 13"><path d="M7 .8L1.200 6.500L7 12.200" fill="none" stroke="#8e8e8e" stroke-width="1.200"/></svg>
<svg style="left:64px;top:8px" width="8" height="13" viewBox="0 0 8 13"><path d="M1 .8L6.800 6.500L1 12.200" fill="none" stroke="#cdcdcd" stroke-width="1.200"/></svg>
<div class="abs" style="left:80px;top:6px;width:1px;height:16px;background:#c8c8c8"></div>
<svg style="left:89px;top:7px" width="12" height="15" viewBox="0 0 12 15"><path d="M.75 .75H8L11.250 4V14.250H.75Z" fill="#e9f4fe" stroke="#3f97ea" stroke-width="1.500" stroke-linejoin="round"/><path d="M3.500 11L6 5.500L8.500 11M4.300 9.300H7.700" fill="none" stroke="#3f97ea" stroke-width="1"/></svg>
<span style="left:107px">test13</span><svg style="left:143.5px;top:9px" width="5" height="11" viewBox="0 0 5 11"><path d="M.7 .5L4.200 5.500L.7 10.500" fill="none" stroke="#b9b9b9" stroke-width="1"/></svg>
<div class="fold" style="left:153px;top:10px"></div>
<span style="left:173px">src</span><svg style="left:193px;top:9px" width="5" height="11" viewBox="0 0 5 11"><path d="M.7 .5L4.200 5.500L.7 10.500" fill="none" stroke="#b9b9b9" stroke-width="1"/></svg>
<div class="doc" style="left:204px;top:7px"><em style="color:#a3131f;font-size:11px;line-height:11px;left:1.500px;bottom:0;letter-spacing:0">h</em></div>
<span style="left:222px">ofApp.h</span><svg style="left:267.5px;top:9px" width="5" height="11" viewBox="0 0 5 11"><path d="M.7 .5L4.200 5.500L.7 10.500" fill="none" stroke="#b9b9b9" stroke-width="1"/></svg>
<span style="left:277px">No Selection</span>
<div class="abs" style="left:754px;top:6px;width:1px;height:17px;background:#b0b0b0"></div>
<svg style="left:759px;top:8px" width="8" height="13" viewBox="0 0 8 13"><path d="M7 .8L1.200 6.500L7 12.200" fill="none" stroke="#a0a0a0" stroke-width="1.200"/></svg>
<svg style="left:774px;top:9px" width="12" height="12" viewBox="0 0 11 11"><path d="M3.300 .3 H7.700 L10.700 3.300 V7.700 L7.700 10.700 H3.300 L.3 7.700 V3.300 Z" fill="#e0101a" stroke="#c20812" stroke-width=".5"/><rect x="4.700" y="2.200" width="1.600" height="4.200" rx=".5" fill="#fff"/><rect x="4.700" y="7.300" width="1.600" height="1.600" rx=".5" fill="#fff"/></svg>
<svg style="left:793px;top:8px" width="8" height="13" viewBox="0 0 8 13"><path d="M1 .8L6.800 6.500L1 12.200" fill="none" stroke="#a0a0a0" stroke-width="1.200"/></svg>
</div>
<div id="gut"></div><div id="gut2"></div>
<div class="ln e" style="top:29px">
<svg style="left:1px;top:1px" width="11" height="11" viewBox="0 0 11 11"><path d="M3.300 .3 H7.700 L10.700 3.300 V7.700 L7.700 10.700 H3.300 L.3 7.700 V3.300 Z" fill="#e0101a" stroke="#c20812" stroke-width=".5"/><rect x="4.700" y="2.200" width="1.600" height="4.200" rx=".5" fill="#fff"/><rect x="4.700" y="7.300" width="1.600" height="1.600" rx=".5" fill="#fff"/></svg>
<div class="tage" style="left:612px;width:176px"><svg style="left:1px;top:1px" width="11" height="11" viewBox="0 0 11 11"><path d="M3.300 .3 H7.700 L10.700 3.300 V7.700 L7.700 10.700 H3.300 L.3 7.700 V3.300 Z" fill="#e0101a" stroke="#c20812" stroke-width=".5"/><rect x="4.700" y="2.200" width="1.600" height="4.200" rx=".5" fill="#fff"/><rect x="4.700" y="7.300" width="1.600" height="1.600" rx=".5" fill="#fff"/></svg>Invalid preprocessing directive<div class="cnt">2</div></div>
<div class="code">#pragma once</div>
</div>
<div class="ln w" style="top:42px">
<svg style="left:1px;top:1.5px" width="11" height="10" viewBox="0 0 11 10"><path d="M5.500 .5 L10.500 9.100 Q10.600 9.700 10 9.700 H1 Q.4 9.700 .5 9.100 Z" fill="#f5c211" stroke="#eab308" stroke-width=".5" stroke-linejoin="round"/><path d="M5.500 2.800 L8.200 8.400 H2.800 Z" fill="#f8cf3a"/><rect x="4.800" y="3.200" width="1.400" height="3.400" rx=".5" fill="#fff4c4"/><rect x="4.800" y="7.300" width="1.400" height="1.300" rx=".5" fill="#fff4c4"/></svg>
<div class="tagw"><svg style="left:3px;top:1.5px" width="11" height="10" viewBox="0 0 11 10"><path d="M5.500 .5 L10.500 9.100 Q10.600 9.700 10 9.700 H1 Q.4 9.700 .5 9.100 Z" fill="#f5c211" stroke="#eab308" stroke-width=".5" stroke-linejoin="round"/><path d="M5.500 2.800 L8.200 8.400 H2.800 Z" fill="#f8cf3a"/><rect x="4.800" y="3.200" width="1.400" height="3.400" rx=".5" fill="#fff4c4"/><rect x="4.800" y="7.300" width="1.400" height="1.300" rx=".5" fill="#fff4c4"/></svg>Null character ignored</div>
</div>
<div class="ln e" style="top:55px">
<svg style="left:1px;top:1px" width="11" height="11" viewBox="0 0 11 11"><path d="M3.300 .3 H7.700 L10.700 3.300 V7.700 L7.700 10.700 H3.300 L.3 7.700 V3.300 Z" fill="#e0101a" stroke="#c20812" stroke-width=".5"/><rect x="4.700" y="2.200" width="1.600" height="4.200" rx=".5" fill="#fff"/><rect x="4.700" y="7.300" width="1.600" height="1.600" rx=".5" fill="#fff"/></svg>
<div class="tage" style="left:562px;width:226px"><svg style="left:1px;top:1px" width="11" height="11" viewBox="0 0 11 11"><path d="M3.300 .3 H7.700 L10.700 3.300 V7.700 L7.700 10.700 H3.300 L.3 7.700 V3.300 Z" fill="#e0101a" stroke="#c20812" stroke-width=".5"/><rect x="4.700" y="2.200" width="1.600" height="4.200" rx=".5" fill="#fff"/><rect x="4.700" y="7.300" width="1.600" height="1.600" rx=".5" fill="#fff"/></svg>Invalid preprocessing directive<div class="cnt">3</div></div>
<div class="code">#include "ofMain.h"</div>
</div>
<div class="ln w" style="top:68px">
<svg style="left:1px;top:1.5px" width="11" height="10" viewBox="0 0 11 10"><path d="M5.500 .5 L10.500 9.100 Q10.600 9.700 10 9.700 H1 Q.4 9.700 .5 9.100 Z" fill="#f5c211" stroke="#eab308" stroke-width=".5" stroke-linejoin="round"/><path d="M5.500 2.800 L8.200 8.400 H2.800 Z" fill="#f8cf3a"/><rect x="4.800" y="3.200" width="1.400" height="3.400" rx=".5" fill="#fff4c4"/><rect x="4.800" y="7.300" width="1.400" height="1.300" rx=".5" fill="#fff4c4"/></svg>
<div class="tagw"><svg style="left:3px;top:1.5px" width="11" height="10" viewBox="0 0 11 10"><path d="M5.500 .5 L10.500 9.100 Q10.600 9.700 10 9.700 H1 Q.4 9.700 .5 9.100 Z" fill="#f5c211" stroke="#eab308" stroke-width=".5" stroke-linejoin="round"/><path d="M5.500 2.800 L8.200 8.400 H2.800 Z" fill="#f8cf3a"/><rect x="4.800" y="3.200" width="1.400" height="3.400" rx=".5" fill="#fff4c4"/><rect x="4.800" y="7.300" width="1.400" height="1.300" rx=".5" fill="#fff4c4"/></svg>Null character ignored</div>
</div>
<div class="ln " style="top:81px">
<svg style="left:1px;top:1px" width="11" height="11" viewBox="0 0 11 11"><circle cx="5.500" cy="5.500" r="5.200" fill="#e0101a"/><circle cx="5.500" cy="5.500" r="2.200" fill="#fff"/></svg>
<div class="code">class testApp : public ofBaseApp{</div>
</div>
<div class="ln w" style="top:94px">
<svg style="left:1px;top:1.5px" width="11" height="10" viewBox="0 0 11 10"><path d="M5.500 .5 L10.500 9.100 Q10.600 9.700 10 9.700 H1 Q.4 9.700 .5 9.100 Z" fill="#f5c211" stroke="#eab308" stroke-width=".5" stroke-linejoin="round"/><path d="M5.500 2.800 L8.200 8.400 H2.800 Z" fill="#f8cf3a"/><rect x="4.800" y="3.200" width="1.400" height="3.400" rx=".5" fill="#fff4c4"/><rect x="4.800" y="7.300" width="1.400" height="1.300" rx=".5" fill="#fff4c4"/></svg>
<div class="tagw"><svg style="left:3px;top:1.5px" width="11" height="10" viewBox="0 0 11 10"><path d="M5.500 .5 L10.500 9.100 Q10.600 9.700 10 9.700 H1 Q.4 9.700 .5 9.100 Z" fill="#f5c211" stroke="#eab308" stroke-width=".5" stroke-linejoin="round"/><path d="M5.500 2.800 L8.200 8.400 H2.800 Z" fill="#f8cf3a"/><rect x="4.800" y="3.200" width="1.400" height="3.400" rx=".5" fill="#fff4c4"/><rect x="4.800" y="7.300" width="1.400" height="1.300" rx=".5" fill="#fff4c4"/></svg>Null character ignored</div>
<div class="code">public:</div>
</div>
<div class="ln w" style="top:107px">
<svg style="left:1px;top:1.5px" width="11" height="10" viewBox="0 0 11 10"><path d="M5.500 .5 L10.500 9.100 Q10.600 9.700 10 9.700 H1 Q.4 9.700 .5 9.100 Z" fill="#f5c211" stroke="#eab308" stroke-width=".5" stroke-linejoin="round"/><path d="M5.500 2.800 L8.200 8.400 H2.800 Z" fill="#f8cf3a"/><rect x="4.800" y="3.200" width="1.400" height="3.400" rx=".5" fill="#fff4c4"/><rect x="4.800" y="7.300" width="1.400" height="1.300" rx=".5" fill="#fff4c4"/></svg>
<div class="tagw"><svg style="left:3px;top:1.5px" width="11" height="10" viewBox="0 0 11 10"><path d="M5.500 .5 L10.500 9.100 Q10.600 9.700 10 9.700 H1 Q.4 9.700 .5 9.100 Z" fill="#f5c211" stroke="#eab308" stroke-width=".5" stroke-linejoin="round"/><path d="M5.500 2.800 L8.200 8.400 H2.800 Z" fill="#f8cf3a"/><rect x="4.800" y="3.200" width="1.400" height="3.400" rx=".5" fill="#fff4c4"/><rect x="4.800" y="7.300" width="1.400" height="1.300" rx=".5" fill="#fff4c4"/></svg>Null character ignored</div>
<div class="code">    void setup();</div>
</div>
<div class="ln w" style="top:120px">
<svg style="left:1px;top:1.5px" width="11" height="10" viewBox="0 0 11 10"><path d="M5.500 .5 L10.500 9.100 Q10.600 9.700 10 9.700 H1 Q.4 9.700 .5 9.100 Z" fill="#f5c211" stroke="#eab308" stroke-width=".5" stroke-linejoin="round"/><path d="M5.500 2.800 L8.200 8.400 H2.800 Z" fill="#f8cf3a"/><rect x="4.800" y="3.200" width="1.400" height="3.400" rx=".5" fill="#fff4c4"/><rect x="4.800" y="7.300" width="1.400" height="1.300" rx=".5" fill="#fff4c4"/></svg>
<div class="tagw"><svg style="left:3px;top:1.5px" width="11" height="10" viewBox="0 0 11 10"><path d="M5.500 .5 L10.500 9.100 Q10.600 9.700 10 9.700 H1 Q.4 9.700 .5 9.100 Z" fill="#f5c211" stroke="#eab308" stroke-width=".5" stroke-linejoin="round"/><path d="M5.500 2.800 L8.200 8.400 H2.800 Z" fill="#f8cf3a"/><rect x="4.800" y="3.200" width="1.400" height="3.400" rx=".5" fill="#fff4c4"/><rect x="4.800" y="7.300" width="1.400" height="1.300" rx=".5" fill="#fff4c4"/></svg>Null character ignored</div>
<div class="code">    void update();</div>
</div>
<div class="ln w" style="top:133px">
<svg style="left:1px;top:1.5px" width="11" height="10" viewBox="0 0 11 10"><path d="M5.500 .5 L10.500 9.100 Q10.600 9.700 10 9.700 H1 Q.4 9.700 .5 9.100 Z" fill="#f5c211" stroke="#eab308" stroke-width=".5" stroke-linejoin="round"/><path d="M5.500 2.800 L8.200 8.400 H2.800 Z" fill="#f8cf3a"/><rect x="4.800" y="3.200" width="1.400" height="3.400" rx=".5" fill="#fff4c4"/><rect x="4.800" y="7.300" width="1.400" height="1.300" rx=".5" fill="#fff4c4"/></svg>
<div class="tagw"><svg style="left:3px;top:1.5px" width="11" height="10" viewBox="0 0 11 10"><path d="M5.500 .5 L10.500 9.100 Q10.600 9.700 10 9.700 H1 Q.4 9.700 .5 9.100 Z" fill="#f5c211" stroke="#eab308" stroke-width=".5" stroke-linejoin="round"/><path d="M5.500 2.800 L8.200 8.400 H2.800 Z" fill="#f8cf3a"/><rect x="4.800" y="3.200" width="1.400" height="3.400" rx=".5" fill="#fff4c4"/><rect x="4.800" y="7.300" width="1.400" height="1.300" rx=".5" fill="#fff4c4"/></svg>Null character ignored</div>
<div class="code">    void draw();</div>
</div>
<div class="ln w" style="top:146px">
<svg style="left:1px;top:1.5px" width="11" height="10" viewBox="0 0 11 10"><path d="M5.500 .5 L10.500 9.100 Q10.600 9.700 10 9.700 H1 Q.4 9.700 .5 9.100 Z" fill="#f5c211" stroke="#eab308" stroke-width=".5" stroke-linejoin="round"/><path d="M5.500 2.800 L8.200 8.400 H2.800 Z" fill="#f8cf3a"/><rect x="4.800" y="3.200" width="1.400" height="3.400" rx=".5" fill="#fff4c4"/><rect x="4.800" y="7.300" width="1.400" height="1.300" rx=".5" fill="#fff4c4"/></svg>
<div class="tagw"><svg style="left:3px;top:1.5px" width="11" height="10" viewBox="0 0 11 10"><path d="M5.500 .5 L10.500 9.100 Q10.600 9.700 10 9.700 H1 Q.4 9.700 .5 9.100 Z" fill="#f5c211" stroke="#eab308" stroke-width=".5" stroke-linejoin="round"/><path d="M5.500 2.800 L8.200 8.400 H2.800 Z" fill="#f8cf3a"/><rect x="4.800" y="3.200" width="1.400" height="3.400" rx=".5" fill="#fff4c4"/><rect x="4.800" y="7.300" width="1.400" height="1.300" rx=".5" fill="#fff4c4"/></svg>Null character ignored</div>
</div>
<div class="ln w" style="top:159px">
<svg style="left:1px;top:1.5px" width="11" height="10" viewBox="0 0 11 10"><path d="M5.500 .5 L10.500 9.100 Q10.600 9.700 10 9.700 H1 Q.4 9.700 .5 9.100 Z" fill="#f5c211" stroke="#eab308" stroke-width=".5" stroke-linejoin="round"/><path d="M5.500 2.800 L8.200 8.400 H2.800 Z" fill="#f8cf3a"/><rect x="4.800" y="3.200" width="1.400" height="3.400" rx=".5" fill="#fff4c4"/><rect x="4.800" y="7.300" width="1.400" height="1.300" rx=".5" fill="#fff4c4"/></svg>
<div class="tagw"><svg style="left:3px;top:1.5px" width="11" height="10" viewBox="0 0 11 10"><path d="M5.500 .5 L10.500 9.100 Q10.600 9.700 10 9.700 H1 Q.4 9.700 .5 9.100 Z" fill="#f5c211" stroke="#eab308" stroke-width=".5" stroke-linejoin="round"/><path d="M5.500 2.800 L8.200 8.400 H2.800 Z" fill="#f8cf3a"/><rect x="4.800" y="3.200" width="1.400" height="3.400" rx=".5" fill="#fff4c4"/><rect x="4.800" y="7.300" width="1.400" height="1.300" rx=".5" fill="#fff4c4"/></svg>Null character ignored</div>
<div class="code">    void keyPressed(int key);</div>
</div>
<div class="ln w" style="top:172px">
<svg style="left:1px;top:1.5px" width="11" height="10" viewBox="0 0 11 10"><path d="M5.500 .5 L10.500 9.100 Q10.600 9.700 10 9.700 H1 Q.4 9.700 .5 9.100 Z" fill="#f5c211" stroke="#eab308" stroke-width=".5" stroke-linejoin="round"/><path d="M5.500 2.800 L8.200 8.400 H2.800 Z" fill="#f8cf3a"/><rect x="4.800" y="3.200" width="1.400" height="3.400" rx=".5" fill="#fff4c4"/><rect x="4.800" y="7.300" width="1.400" height="1.300" rx=".5" fill="#fff4c4"/></svg>
<div class="tagw"><svg style="left:3px;top:1.5px" width="11" height="10" viewBox="0 0 11 10"><path d="M5.500 .5 L10.500 9.100 Q10.600 9.700 10 9.700 H1 Q.4 9.700 .5 9.100 Z" fill="#f5c211" stroke="#eab308" stroke-width=".5" stroke-linejoin="round"/><path d="M5.500 2.800 L8.200 8.400 H2.800 Z" fill="#f8cf3a"/><rect x="4.800" y="3.200" width="1.400" height="3.400" rx=".5" fill="#fff4c4"/><rect x="4.800" y="7.300" width="1.400" height="1.300" rx=".5" fill="#fff4c4"/></svg>Null character ignored</div>
<div class="code">    void keyReleased(int key);</div>
</div>
<div class="ln w" style="top:185px">
<svg style="left:1px;top:1.5px" width="11" height="10" viewBox="0 0 11 10"><path d="M5.500 .5 L10.500 9.100 Q10.600 9.700 10 9.700 H1 Q.4 9.700 .5 9.100 Z" fill="#f5c211" stroke="#eab308" stroke-width=".5" stroke-linejoin="round"/><path d="M5.500 2.800 L8.200 8.400 H2.800 Z" fill="#f8cf3a"/><rect x="4.800" y="3.200" width="1.400" height="3.400" rx=".5" fill="#fff4c4"/><rect x="4.800" y="7.300" width="1.400" height="1.300" rx=".5" fill="#fff4c4"/></svg>
<div class="tagw"><svg style="left:3px;top:1.5px" width="11" height="10" viewBox="0 0 11 10"><path d="M5.500 .5 L10.500 9.100 Q10.600 9.700 10 9.700 H1 Q.4 9.700 .5 9.100 Z" fill="#f5c211" stroke="#eab308" stroke-width=".5" stroke-linejoin="round"/><path d="M5.500 2.800 L8.200 8.400 H2.800 Z" fill="#f8cf3a"/><rect x="4.800" y="3.200" width="1.400" height="3.400" rx=".5" fill="#fff4c4"/><rect x="4.800" y="7.300" width="1.400" height="1.300" rx=".5" fill="#fff4c4"/></svg>Null character ignored</div>
<div class="code">    void mouseMoved(int x, int y);</div>
</div>
<div class="ln " style="top:198px">
<div class="code">    void mouseDragged(int x, int y, int button);</div>
</div>
<div class="ln " style="top:211px">
<div class="code">    void mousePressed(int x, int y, int button);</div>
</div>
<div class="ln " style="top:224px">
<div class="code">    void mouseReleased(int x, int y, int button);</div>
</div>
<div class="ln " style="top:237px">
<div class="code">    void windowResized(int w, int h);</div>
</div>
<div class="ln " style="top:250px">
<div class="code">    void dragEvent(ofDragInfo dragInfo);</div>
</div>
<div class="ln " style="top:263px">
<div class="code">    void gotMessage(ofMessage msg);</div>
</div>
<div class="ln " style="top:276px">
<div class="code">};</div>
</div>
<div class="nm" style="left:40.5px;top:40px"></div>
<div class="nm" style="left:34.5px;top:53px"></div>
<div class="nm" style="left:34.5px;top:66px"></div>
<div class="nm" style="left:40.5px;top:66px"></div>
<div class="nm" style="left:153.5px;top:66px"></div>
<div class="nm" style="left:34.5px;top:79px"></div>
<div class="nm" style="left:48.5px;top:92px"></div>
<div class="nm" style="left:34.5px;top:105px"></div>
<div class="nm" style="left:34.5px;top:118px"></div>
<div class="nm" style="left:34.5px;top:131px"></div>
<div class="nm" style="left:34.5px;top:144px"></div>
<div class="nm" style="left:34.5px;top:157px"></div>
<div class="nm" style="left:34.5px;top:170px"></div>
<div class="nm" style="left:34.5px;top:183px"></div>
<div class="nm" style="left:34.5px;top:196px"></div>
<div class="abs" style="left:789px;top:29px;width:1px;height:566px;background:#efefef"></div>
<div class="abs" style="left:790px;top:39px;width:14px;height:1px;background:#f0a040"></div>
<div class="abs" style="left:0;top:595px;width:804px;height:30px;background:#f3f3f3;border-top:1px solid #c0c0c0;border-bottom:1px solid #c0c0c0"></div>
<svg style="left:9px;top:604px" width="15" height="12" viewBox="0 0 15 12"><rect x=".5" y=".5" width="14" height="11" fill="none" stroke="#9a9a9a" stroke-width="1"/><path d="M4.500 4.500H10.500L7.500 8Z" fill="none" stroke="#9a9a9a" stroke-width="1"/></svg>
<svg style="left:41px;top:606px" width="15" height="9" viewBox="0 0 15 9"><path d="M0 0H11L15 4.500L11 9H0Z" fill="#5a8bdc"/></svg>
<span class="abs" style="left:10px;top:717px;font-size:11.500px;line-height:16px;color:#222">Auto</span>
<svg style="left:37px;top:720px" width="8" height="11" viewBox="0 0 8 11"><path d="M1 4L4 1L7 4M1 7L4 10L7 7" fill="none" stroke="#444" stroke-width="1.200"/></svg>
<div class="abs" style="left:52px;top:718px;width:1px;height:14px;background:#c8c8c8"></div>
</div>
</div>
<div id="jd">
<div id="jtb">
<div class="tl" style="left:8px;top:5px;background:#d9d9d9;border-color:#c4c4c4"></div>
<div class="tl" style="left:28px;top:5px;background:#fdb916;border-color:#e0a010"></div>
<div class="tl" style="left:48px;top:5px;background:#18c83c;border-color:#12ac30"></div>
<div class="doc" style="left:491px;top:3px;width:11px;height:14px"><em style="color:#a3131f;font-size:10.500px;line-height:11px;left:1.500px;bottom:0;letter-spacing:0">h</em></div>
<span class="abs" style="left:509px;top:3px;line-height:16px;white-space:nowrap;font-size:14px">ofApp.h</span>
</div>
<div class="abs" style="left:0;top:22px;width:4px;height:456px;background:#f1f1f1;border-right:1px solid #bdbdbd"></div>
<div id="jtxt">#pragma once

#include <span style="color:#8e8e8e">"ofMain.h"</span>

class testApp : public ofBaseApp{
public:
<span class="ind"></span>void setup();
<span class="ind"></span>void update();
<span class="ind"></span>void draw();

<span class="ind"></span>void keyPressed(int key);
<span class="ind"></span>void keyReleased(int key);
<span class="ind"></span>void mouseMoved(int x, int y);
<span class="ind"></span>void mouseDragged(int x, int y, int button);
<span class="ind"></span>void mousePressed(int x, int y, int button);
<span class="ind"></span>void mouseReleased(int x, int y, int button);
<span class="ind"></span>void windowResized(int w, int h);
<span class="ind"></span>void dragEvent(ofDragInfo dragInfo);
<span class="ind"></span>void gotMessage(ofMessage msg);
};</div>
<!-- right scroller column -->
<div class="abs" style="left:1035px;top:22px;width:15px;height:456px;background:#fafafa;border-left:1px solid #e9e9e9"></div>
<div class="abs" style="left:1035px;top:22px;width:15px;height:39px;border-left:1px solid #8c8c8c;border-bottom:1px solid #8c8c8c"></div>
<svg style="left:1038px;top:25px" width="10" height="6" viewBox="0 0 10 6"><path d="M0 0H10L5 5.500Z" fill="#000"/><path d="M3 1.200H7L5 3.300Z" fill="#fff"/></svg>
<svg style="left:1037px;top:35px" width="11" height="11" viewBox="0 0 11 11"><rect width="11" height="11" fill="#8a8a8a"/><rect x="2.500" y="3" width="6" height="5.500" fill="none" stroke="#fff" stroke-width="1"/><path d="M4 5.500L5.300 7L8 2.500" fill="none" stroke="#fff" stroke-width="1"/></svg>
<svg style="left:1037px;top:48px" width="11" height="11" viewBox="0 0 11 11"><rect width="11" height="11" fill="#c9c9c9"/><path d="M2.500 2.500L8.500 8.500M8.500 2.500L2.500 8.500" stroke="#fff" stroke-width="1.600"/></svg>
<!-- bottom bar -->
<div class="abs" style="left:4px;top:463px;width:1032px;height:15px;background:#fafafa;border-top:1px solid #e2e2e2"></div>
<div class="abs" style="left:4px;top:464px;width:198px;height:14px;background:#fff"></div>
<span class="abs" style="left:26px;top:464px;font-size:11px;line-height:15px;color:#222;white-space:nowrap">100%</span>
<svg style="left:56px;top:466px" width="7" height="12" viewBox="0 0 7 12"><path d="M.8 4.500L3.500 1.800L6.200 4.500M.8 8L3.500 10.700L6.200 8" fill="none" stroke="#333" stroke-width="1.100"/></svg>
<svg style="left:66px;top:465px" width="13" height="13" viewBox="0 0 13 13"><path d="M1 12L2 8.500L9.500 1L12 3.500L4.500 11Z" fill="#777" stroke="#555" stroke-width=".6"/><path d="M1 12L2 8.500L4.500 11Z" fill="#ddd"/></svg>
</div>
<div id="sh">
<div class="lab" style="right:370.500px;top:26px">Save As:</div>
<div class="fld" style="left:114px;top:23px;width:250px;height:23px;border-color:#6aa5ea;box-shadow:0 0 0 2.500px #8dbcf2"><span class="abs" style="left:3px;top:2px;line-height:18px;white-space:nowrap"><span style="background:#b4d5fe">ofApp</span>.h</span></div>
<div class="pop" style="left:373px;top:24px;width:21px;height:21px"><svg style="left:6px;top:7px" width="8" height="6" viewBox="0 0 8 6"><path d="M.8 1L4 4.500L7.200 1" fill="none" stroke="#333" stroke-width="1.400"/></svg></div>
<div class="lab" style="right:370.500px;top:55px">Tags:</div>
<div class="fld" style="left:114px;top:53px;width:250px;height:22px"></div>
<div class="lab" style="right:370.500px;top:84px">Where:</div>
<div class="pop" style="left:114px;top:83px;width:250px"><svg style="left:8px;top:3px" width="16" height="13" viewBox="0 0 16 13"><path d="M.5 1.500c0-.6.400-1 1-1h4.300c.4 0 .7.200.9.500l.7 1h7.100c.6 0 1 .4 1 1v8.500c0 .6-.400 1-1 1H1.500c-.6 0-1-.4-1-1z" fill="#58b8f0"/><path d="M.5 4h15v7.500c0 .6-.400 1-1 1H1.500c-.6 0-1-.4-1-1z" fill="#7fd0f8"/></svg><span class="abs" style="left:28px;top:0">src</span><i><svg style="left:4px;top:4px" width="8" height="13" viewBox="0 0 8 13"><path d="M1.200 4.800L4 2L6.800 4.800M1.200 8.200L4 11L6.800 8.200" fill="none" stroke="#fff" stroke-width="1.400"/></svg></i></div>
<div class="abs" style="left:10px;top:117px;width:459px;height:113px;background:#e3e3e3;border:1px solid #dcdcdc;border-radius:4px"></div>
<div class="lab" style="left:23px;top:128px">Encoding:</div>
<div class="lab" style="left:300px;top:128px">Line Endings:</div>
<div class="pop" style="left:23px;top:148px;width:250px"><span class="abs" style="left:8px;top:0">Unicode (UTF-16)</span><i><svg style="left:4px;top:4px" width="8" height="13" viewBox="0 0 8 13"><path d="M1.200 4.800L4 2L6.800 4.800M1.200 8.200L4 11L6.800 8.200" fill="none" stroke="#fff" stroke-width="1.400"/></svg></i></div>
<div class="pop" style="left:300px;top:148px;width:146px"><span class="abs" style="left:8px;top:0">Unix (LF)</span><i><svg style="left:4px;top:4px" width="8" height="13" viewBox="0 0 8 13"><path d="M1.200 4.800L4 2L6.800 4.800M1.200 8.200L4 11L6.800 8.200" fill="none" stroke="#fff" stroke-width="1.400"/></svg></i></div>
<div class="abs" style="left:24px;top:180px;width:14px;height:14px;border-radius:3px;background:linear-gradient(#5aa8fb,#1c72f4)"><svg style="left:2px;top:2px" width="10" height="10" viewBox="0 0 10 10"><path d="M1.500 5.200L4 8L8.500 1.500" fill="none" stroke="#fff" stroke-width="1.600"/></svg></div>
<div class="lab" style="left:42px;top:178px">Attach Document Information in Resource Fork</div>
<div class="abs" style="left:24px;top:200px;width:14px;height:14px;border-radius:3px;background:#fff;border:1px solid #b8b8b8"></div>
<div class="lab" style="left:42px;top:198px;letter-spacing:.32px">If extension is not provide, use '.h'</div>
<div class="pop" style="left:322px;top:241px;width:69px;text-align:center">Cancel</div>
<div class="pop" style="left:399px;top:241px;width:71px;text-align:center;color:#fff;border-color:#2a7bf0;background:linear-gradient(#5aa8fb,#1a70f4)">Save</div>
</div>
</body></html>
